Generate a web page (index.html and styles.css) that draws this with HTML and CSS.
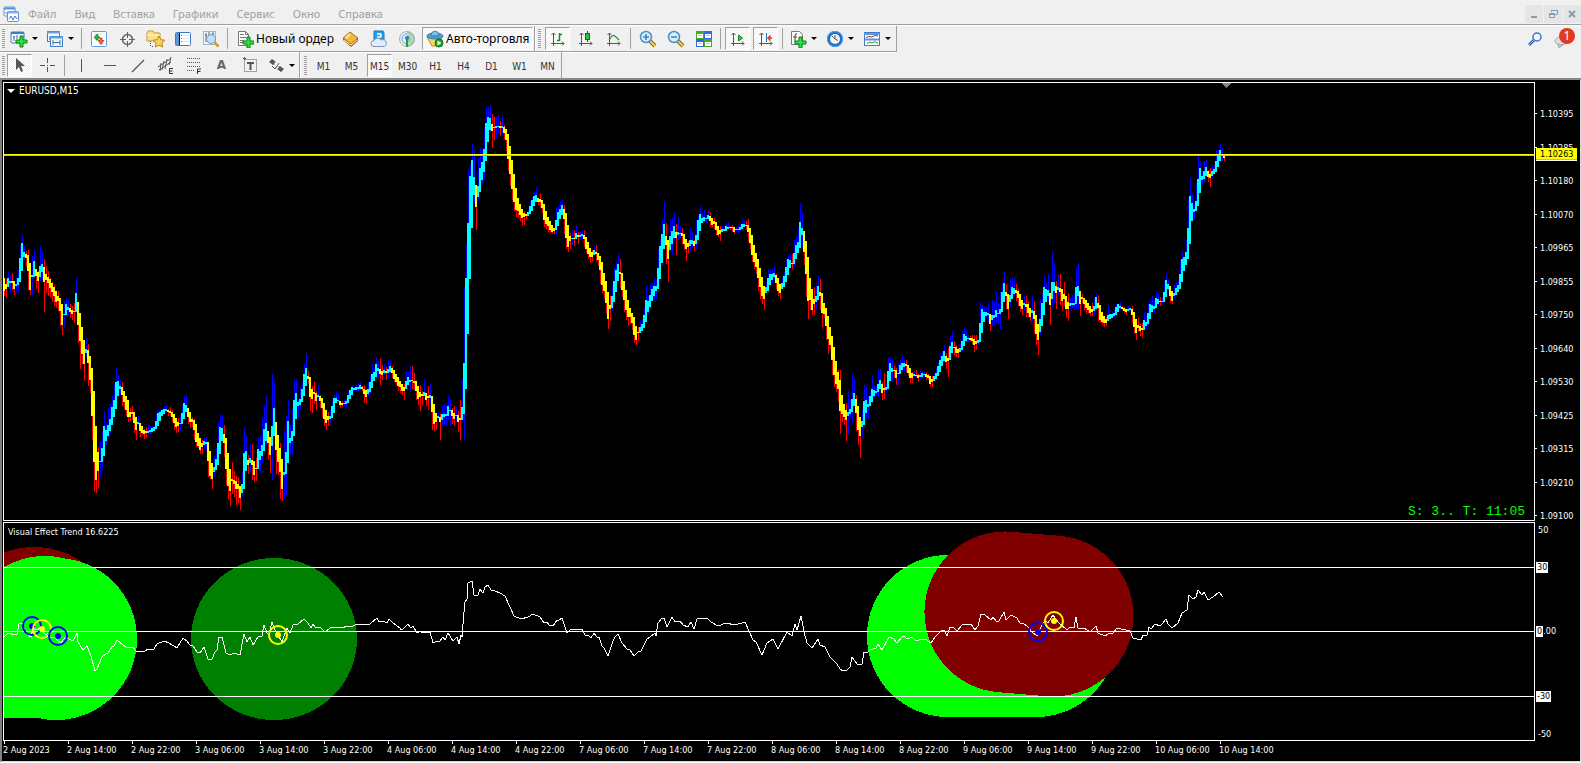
FILE: index.html
```html
<!DOCTYPE html>
<html lang="ru">
<head>
<meta charset="utf-8">
<title>EURUSD,M15</title>
<link rel="stylesheet" href="styles.css">
</head>
<body>
<header class="menubar">
  <svg class="app-icon" width="16" height="16" viewBox="0 0 16 16"><rect x="1" y="1" width="11" height="9" rx="1" fill="#fff" stroke="#5b8fdc"/><path d="M1 2.500h11" stroke="#5b8fdc" stroke-width="2"/><path d="M3 8V6M5 8V5" stroke="#5b8fdc"/><rect x="4.500" y="5.500" width="11" height="10" rx="1" fill="#fff" stroke="#5b8fdc"/><path d="M5 6.500h10" stroke="#8ab2ec" stroke-width="2"/><path d="M6 13l2-3 2 4 2-4 2 3" fill="none" stroke="#3d77cf"/></svg>
  <nav class="menu">
    <button>Файл</button><button>Вид</button><button>Вставка</button><button>Графики</button><button>Сервис</button><button>Окно</button><button>Справка</button>
  </nav>
  <div class="window-controls">
    <button aria-label="Свернуть"><svg width="10" height="10" viewBox="0 0 10 10"><path d="M2 8h6" stroke="#8a9db0" stroke-width="2"/></svg></button>
    <button aria-label="Восстановить"><svg width="10" height="10" viewBox="0 0 10 10" fill="none" stroke="#8a9db0"><path d="M3.500 3V1.500h6v4H7M3 1.500h7M1.500 4.500h5v4h-5zM1 5.500h6"/></svg></button>
    <button aria-label="Закрыть"><svg width="10" height="10" viewBox="0 0 10 10"><path d="M2 2l6 6M8 2L2 8" stroke="#8a9db0" stroke-width="2"/></svg></button>
  </div>
</header>

<div class="toolbars">
 <div class="tool-rows">
  <div class="row row-main">
    <div class="bar">
      <span class="grip"></span>
      <button class="drop" aria-label="Новый график"><svg width="18" height="18" viewBox="0 0 18 18"><rect x="1" y="2" width="13" height="11" rx="1" fill="#f4faff" stroke="#3a7fc2"/><path d="M1 3h13" stroke="#3a7fc2" stroke-width="2"/><path d="M4 6v5M3 7h2M7 5v4" stroke="#57718c"/><path d="M10 6h3v4h4v3h-4v4h-3v-4H6v-3h4z" fill="#2fe040" stroke="#078014"/></svg></button>
      <button class="drop" aria-label="Профили"><svg width="18" height="18" viewBox="0 0 18 18"><rect x="1.500" y="1.500" width="12" height="10" fill="#f4faff" stroke="#3a7fc2"/><path d="M1 2.500h13" stroke="#6da3d8" stroke-width="2"/><path d="M3 8h6M4 6v4" stroke="#57718c"/><rect x="4.500" y="6.500" width="12" height="10" fill="#e8f2fb" stroke="#3a7fc2"/><path d="M4 7.500h13" stroke="#6da3d8" stroke-width="2"/><path d="M7 10v5M14 10v5M7 12.500h7" stroke="#57718c" fill="none"/></svg></button>
      <span class="sep"></span>
      <button class="tool" aria-label="Обзор рынка"><svg width="18" height="18" viewBox="0 0 18 18"><rect x="1.500" y="1.500" width="15" height="15" rx="1" fill="#fbfdff" stroke="#5a9fdc"/><path d="M4 4h8M4 6h4M9 14h5" stroke="#cdd9e4"/><path d="M7 4l3 4H8v2H6V8H4z" fill="#2bb534" stroke="#15801c" stroke-width=".7"/><path d="M11 14.500l3-4h-2V8h-2v2.500H8z" fill="#ef6a3a" stroke="#b93410" stroke-width=".7"/></svg></button>
      <button class="tool" aria-label="Окно данных"><svg width="18" height="18" viewBox="0 0 18 18" fill="none" stroke="#606468"><circle cx="9.500" cy="9.500" r="5" stroke-width="1.500"/><path d="M9.500 2v6M9.500 11v6M2 9.500h6M11 9.500h6"/></svg></button>
      <button class="tool" aria-label="Навигатор"><svg width="20" height="18" viewBox="0 0 20 18"><path d="M2 3l1-2h5l1 2h6v8H2z" fill="#fbe38a" stroke="#c9992b"/><path d="M2 5h13" stroke="#fff4c4"/><path d="M5.500 11v6M8 16.500H6" stroke="#555" stroke-dasharray="1 1"/><path d="M14 6l1.900 3.700 4 .5-3 2.800.8 4L14 15.200 10.300 17l.8-4-3-2.800 4-.5z" fill="#fbd35a" stroke="#b98518"/></svg></button>
      <button class="tool" aria-label="Терминал"><svg width="18" height="18" viewBox="0 0 18 18"><rect x="1.500" y="2.500" width="15" height="13" rx="1" fill="#fff" stroke="#3a7cc4"/><rect x="2" y="3" width="3" height="12" fill="#5d95d4"/><path d="M5.500 3v12" stroke="#111"/><path d="M7 5.500h1M7 8.500h1M7 11.500h1" stroke="#e33"/><path d="M9 5.500h6M9 8.500h6M9 11.500h6" stroke="#dbe6f1"/></svg></button>
      <button class="tool" aria-label="Тестер стратегий"><svg width="18" height="18" viewBox="0 0 18 18"><rect x="1.500" y="1.500" width="12" height="13" fill="#f6f6f6" stroke="#a9b3bc"/><path d="M4 3v9M7 2v5M11 2v4M3 5h2M10 4h2" stroke="#5a6a78"/><circle cx="9" cy="9" r="4.500" fill="#b7dbf5" fill-opacity=".85" stroke="#6e9cc4"/><path d="M12.500 12.500l4 4" stroke="#d49a22" stroke-width="2.500"/></svg></button>
      <span class="sep"></span>
      <button class="labelled order"><svg width="18" height="18" viewBox="0 0 18 18"><path d="M2.500 1.500h7l3 3v11h-10z" fill="#fff" stroke="#777"/><path d="M9.500 1.500v3h3M4 4.500h4M4 7.500h6M4 10.500h4M4 12.500h3" stroke="#777" fill="none"/><path d="M11 7h3v4h4v3h-4v4h-3v-4H7v-3h4z" fill="#2fe040" stroke="#078014"/></svg><span>Новый ордер</span></button>
      <button class="tool" aria-label="MetaEditor"><svg width="18" height="18" viewBox="0 0 18 18"><path d="M1 8l7-6 8 6v3l-7 6-8-7z" fill="#a8690e"/><path d="M1 8l7-6 8 6-7 6z" fill="#f0b93a" stroke="#a8690e" stroke-width=".8"/><path d="M4 8l4-4" stroke="#fde9a8" stroke-width="2"/><path d="M2 10l7 5 6-5" fill="none" stroke="#fff2d0"/></svg></button>
      <button class="tool" aria-label="MQL5"><svg width="18" height="18" viewBox="0 0 18 18"><path d="M4 1h9l1 2v8H4z" fill="#27a0ea" stroke="#0e77bf"/><path d="M7 4h4M7 7h4M11 4v3" stroke="#fff" stroke-width="1.500"/><path d="M4 16.500a3 3 0 010-6 4 4 0 017-.5 3 3 0 013.500 6.500z" fill="#e5ecf5" stroke="#7d95b2"/></svg></button>
      <button class="tool" aria-label="Сигналы"><svg width="18" height="18" viewBox="0 0 18 18" fill="none"><circle cx="9" cy="9" r="7.500" stroke="#9db2c4" fill="#e8eff4"/><circle cx="9" cy="9" r="5" stroke="#62a8d6"/><path d="M9 1.500a7.500 7.500 0 010 15z" fill="#7dbf83" opacity=".7"/><path d="M9 4a5 5 0 010 10" stroke="#dff3df"/><circle cx="9" cy="8" r="2" fill="#2f75c2"/><path d="M9 9v8" stroke="#2c9a3a" stroke-width="2"/></svg></button>
      <button class="labelled auto pressed"><svg width="18" height="18" viewBox="0 0 18 18"><path d="M1 7h15l-3 9H6z" fill="#fbd65a" stroke="#c08d1d"/><ellipse cx="9" cy="6" rx="8" ry="3" fill="#4f9fd0" stroke="#2c7baf"/><path d="M5 5c0-5 8-5 8 0-2 1.500-6 1.500-8 0z" fill="#7ec1e6" stroke="#2c7baf"/><circle cx="13" cy="13" r="4" fill="#16a528" stroke="#0b7a18"/><path d="M11.500 10.500l4 2.500-4 2.500z" fill="#fff"/></svg><span>Авто-торговля</span></button>
    </div>
    <div class="bar">
      <span class="grip"></span>
      <button class="tool pressed" aria-label="Бары"><svg width="18" height="18" viewBox="0 0 18 18" fill="none"><path d="M4.500 3v13M2 13.500h13M2.500 5l2-2 2 2M13 11.500l2 2-2 2" stroke="#555"/><path d="M10.500 3v8M8 10.500h2M11 4.500h2" stroke="#1a8a1a" stroke-width="1.500"/></svg></button>
      <button class="tool" aria-label="Свечи"><svg width="18" height="18" viewBox="0 0 18 18" fill="none"><path d="M4.500 3v13M2 13.500h13M2.500 5l2-2 2 2M13 11.500l2 2-2 2" stroke="#555"/><path d="M10.500 1v11" stroke="#0c6e16"/><rect x="8.500" y="3.500" width="4" height="6" fill="#27c93c" stroke="#0c6e16"/></svg></button>
      <button class="tool" aria-label="Линия"><svg width="18" height="18" viewBox="0 0 18 18" fill="none"><path d="M4.500 3v13M2 13.500h13M2.500 5l2-2 2 2M13 11.500l2 2-2 2" stroke="#555"/><path d="M4 10l3-4 2-.5L11 7l3 3" stroke="#2a9a32" stroke-width="1.200"/></svg></button>
      <span class="sep"></span>
      <button class="tool" aria-label="Увеличить"><svg width="18" height="18" viewBox="0 0 18 18"><path d="M11 11l5 5" stroke="#94691a" stroke-width="4"/><path d="M11 11l5 5" stroke="#f1cb4e" stroke-width="2"/><circle cx="7" cy="7" r="5.500" fill="#d8eefb" stroke="#4a8fcc" stroke-width="1.500"/><path d="M4 7h6M7 4v6" stroke="#3b7fb8" stroke-width="1.500"/></svg></button>
      <button class="tool" aria-label="Уменьшить"><svg width="18" height="18" viewBox="0 0 18 18"><path d="M11 11l5 5" stroke="#94691a" stroke-width="4"/><path d="M11 11l5 5" stroke="#f1cb4e" stroke-width="2"/><circle cx="7" cy="7" r="5.500" fill="#d8eefb" stroke="#4a8fcc" stroke-width="1.500"/><path d="M4 7h6" stroke="#3b7fb8" stroke-width="1.500"/></svg></button>
      <button class="tool" aria-label="Плитка"><svg width="18" height="18" viewBox="0 0 18 18"><path d="M1 1h8v8H1zM9 9h8v8H9z" fill="#4aa52a"/><path d="M9 1h8v8H9zM1 9h8v8H1z" fill="#2f6bdc"/><path d="M2 4h6v4H2zM10 4h6v4h-6zM2 12h6v4H2zM10 12h6v4h-6z" fill="#fff"/><path d="M3 5.500h4M11 5.500h4M3 13.500h4M11 13.500h4" stroke="#b8c6d8"/></svg></button>
      <span class="sep"></span>
      <button class="tool pressed" aria-label="Автопрокрутка"><svg width="18" height="18" viewBox="0 0 18 18" fill="none"><path d="M4.500 3v13M2 13.500h13M2.500 5l2-2 2 2M13 11.500l2 2-2 2" stroke="#555"/><path d="M9.500 5l4 3-4 3z" fill="#39c54a" stroke="#128a20"/></svg></button>
      <button class="tool pressed" aria-label="Сдвиг графика"><svg width="18" height="18" viewBox="0 0 18 18" fill="none"><path d="M4.500 3v13M2 13.500h13M2.500 5l2-2 2 2M13 11.500l2 2-2 2" stroke="#555"/><path d="M9.500 3v9" stroke="#2a6fb5"/><path d="M15 8h-3M13.500 5.500L11 8l2.500 2.500" stroke="#d2411a" stroke-width="1.500"/></svg></button>
      <span class="sep"></span>
      <button class="drop" aria-label="Индикаторы"><svg width="18" height="18" viewBox="0 0 18 18"><path d="M2.500 1.500h8l3 3v10h-11z" fill="#fff" stroke="#777"/><path d="M8 4q-2-1-2 2v6M4 7h4" fill="none" stroke="#444"/><path d="M10 7h3v4h4v3h-4v4h-3v-4H6v-3h4z" fill="#2fe040" stroke="#078014"/></svg></button>
      <button class="drop" aria-label="Периоды"><svg width="18" height="18" viewBox="0 0 18 18"><circle cx="9" cy="9" r="6.500" fill="#f3f6f9" stroke="#1f6fc4" stroke-width="3"/><circle cx="9" cy="9" r="7.500" fill="none" stroke="#4fa0ea"/><path d="M9 5v4l3 1.500M6 6l3 3" fill="none" stroke="#555"/></svg></button>
      <button class="drop" aria-label="Шаблоны"><svg width="18" height="18" viewBox="0 0 18 18"><rect x="1.500" y="2.500" width="15" height="13" fill="#fff" stroke="#3f7fc6"/><path d="M1 4h16M2 9.500h14" stroke="#5c98da" stroke-width="2"/><path d="M3 7.500l3-1 3 .5 3-1.500 3 .5" fill="none" stroke="#a33"/><path d="M4 13.500l3-1.500 2 1 3-1.500 3 2" fill="none" stroke="#2a8f36"/></svg></button>
    </div>
  </div>
  <div class="row">
    <div class="bar">
      <span class="grip"></span>
      <button class="tool pressed" aria-label="Курсор"><svg width="18" height="18" viewBox="0 0 18 18"><path d="M5 2v12l3-3 2 5 2-1-2-5h4z" fill="#555"/></svg></button>
      <button class="tool" aria-label="Перекрестие"><svg width="18" height="18" viewBox="0 0 18 18"><path d="M8.500 2v5M8.500 11v5M1 9.500h5M11 9.500h5M8 9.500h1" stroke="#555"/></svg></button>
      <span class="sep"></span>
      <button class="tool" aria-label="Вертикальная линия"><svg width="18" height="18" viewBox="0 0 18 18"><path d="M8.500 3v13" stroke="#555"/></svg></button>
      <button class="tool" aria-label="Горизонтальная линия"><svg width="18" height="18" viewBox="0 0 18 18"><path d="M3 9.500h12" stroke="#555"/></svg></button>
      <button class="tool" aria-label="Трендовая линия"><svg width="18" height="18" viewBox="0 0 18 18"><path d="M3 16L15 4" stroke="#555" stroke-width="1.200"/></svg></button>
      <button class="tool" aria-label="Канал"><svg width="18" height="18" viewBox="0 0 18 18"><path d="M1 11L13 3M2 14L14 6M4 7l-1 8M7 5l-2 9M10 3l-2 10M14 1l-2 8" stroke="#555" fill="none"/><path d="M16 12.500h-3.500v5H16M12.500 15h3" stroke="#333" fill="none"/></svg></button>
      <button class="tool" aria-label="Фибоначчи"><svg width="18" height="18" viewBox="0 0 18 18"><path d="M2 2.500h14M2 6.500h14M2 10.500h14M2 14.500h8" stroke="#555" stroke-dasharray="1 1"/><path d="M12.500 18v-5H16M12.500 15.500h3" stroke="#333" fill="none"/></svg></button>
      <button class="tool glyph">A</button>
      <button class="tool" aria-label="Метка"><svg width="18" height="18" viewBox="0 0 18 18" fill="none"><rect x="3.500" y="3.500" width="12" height="12" stroke="#555" stroke-dasharray="1 1"/><path d="M2 2.500h3M3.500 1v3" stroke="#555"/><path d="M6 7h7M9.500 7v7" stroke="#555" stroke-width="2"/></svg></button>
      <button class="drop" aria-label="Стрелки"><svg width="18" height="18" viewBox="0 0 18 18"><path d="M5 3l4 3-2 1 1 1-2 1-4-3zM14 16l-4-3 2-1-1-1 2-1 4 3z" fill="#555"/><path d="M5 10l3 3 4-6" fill="none" stroke="#555"/></svg></button>
    </div>
    <div class="bar periods">
      <span class="grip"></span>
      <button class="tool">M1</button><button class="tool">M5</button><button class="tool pressed">M15</button><button class="tool">M30</button><button class="tool">H1</button><button class="tool">H4</button><button class="tool">D1</button><button class="tool">W1</button><button class="tool">MN</button>
    </div>
  </div>
 </div>
 <div class="status">
  <button aria-label="Поиск"><svg width="16" height="16" viewBox="0 0 16 16"><path d="M1 14l5-5" stroke="#2a62c8" stroke-width="3"/><path d="M1 14l5-5" stroke="#8db4f0"/><circle cx="9" cy="6" r="4" fill="#f4f8ff" stroke="#3d73d0" stroke-width="1.500"/></svg></button>
  <button class="messages" aria-label="Сообщения"><svg width="18" height="18" viewBox="0 0 18 18"><ellipse cx="7" cy="10" rx="6" ry="4" fill="#dfdfe3" stroke="#a2a2a8"/><path d="M4 13l1 4 4-3z" fill="#c9c9cd" stroke="#9a9aa0" stroke-width=".7"/></svg><span class="badge">1</span></button>
 </div>
</div>

<main class="chart">
  <section class="panel price-panel">
    <svg id="price" class="plot"></svg>
    <h1 class="caption symbol">EURUSD,M15</h1>
    <p class="timer">S: 3.. T: 11:05</p>
  </section>
  <div class="axis price-axis">
    <span>1.10395</span><span>1.10285</span><span>1.10180</span><span>1.10070</span><span>1.09965</span><span>1.09855</span><span>1.09750</span><span>1.09640</span><span>1.09530</span><span>1.09425</span><span>1.09315</span><span>1.09210</span><span>1.09100</span>
    <b class="bid">1.10263</b>
  </div>
  <section class="panel trend-panel">
    <svg id="trend" class="plot"></svg>
    <h2 class="caption">Visual Effect Trend 16.6225</h2>
  </section>
  <div class="axis trend-axis">
    <span>50</span><span><mark>30</mark></span><span><mark>0</mark>.00</span><span><mark>-30</mark></span><span>-50</span>
  </div>
  <div class="dates">
    <time>2 Aug 2023</time><time>2 Aug 14:00</time><time>2 Aug 22:00</time><time>3 Aug 06:00</time><time>3 Aug 14:00</time><time>3 Aug 22:00</time><time>4 Aug 06:00</time><time>4 Aug 14:00</time><time>4 Aug 22:00</time><time>7 Aug 06:00</time><time>7 Aug 14:00</time><time>7 Aug 22:00</time><time>8 Aug 06:00</time><time>8 Aug 14:00</time><time>8 Aug 22:00</time><time>9 Aug 06:00</time><time>9 Aug 14:00</time><time>9 Aug 22:00</time><time>10 Aug 06:00</time><time>10 Aug 14:00</time>
  </div>
</main>
<script src="chart.js"></script>
</body>
</html>
```

FILE: styles.css
```css
* { box-sizing: border-box; }
body { margin: 0; background: #fff; font-family: "Noto Sans", "Open Sans", sans-serif; font-size: 12px; color: #000; }
button { margin: 0; padding: 0; border: 0; background: none; font: inherit; color: inherit; }
svg { display: block; flex: none; }

.menubar { display: flex; align-items: center; height: 25px; padding: 4px 0 0 3px; background: #f0f0f0; border-bottom: 1px solid #a0a0a0; }
.menu { display: flex; flex: 1; }
.menu button { padding: 0 9px; font-size: 11px; line-height: 18px; color: #a0a0a0; }
.window-controls { display: flex; gap: 1px; }
.window-controls button { display: grid; place-items: center; width: 18px; height: 18px; background: #e5e5e5; }

.toolbars { display: flex; justify-content: space-between; height: 55px; background: #f0f0f0; border-top: 1px solid #fff; border-bottom: 2px solid #8a8a8a; }
.tool-rows { display: flex; flex-direction: column; }
.row { display: flex; height: 26px; width: max-content; }
.row-main { border-bottom: 1px solid #a0a0a0; box-shadow: 0 1px 0 #fff; }
.bar { display: flex; align-items: center; height: 100%; border-right: 1px solid #a0a0a0; }
.row-main .bar:first-child { padding-right: 1px; }
.bar + .bar { box-shadow: inset 1px 0 0 #fff; }
.grip { width: 3px; height: 19px; margin: 0 2px 0 3px; background: repeating-linear-gradient(#a0a0a0 0 1px, #f0f0f0 1px 2px); }
.row-main .bar:first-child .grip { margin: 0 1px 0 2px; }
.row:last-child .bar:first-child .grip { margin: 0 0 0 2px; }
.row:last-child .periods .grip { margin: 0 2px 0 4px; }
.sep { width: 1px; height: 21px; margin: 0 2px 0 3px; background: #a0a0a0; }
.tool { display: grid; place-items: center; width: 25px; height: 23px; margin: 0 1px 0 2px; }
.drop { display: flex; align-items: center; gap: 4px; width: 36px; height: 23px; padding-left: 4px; }
.bar + .bar .drop { width: 37px; }
.drop::after { content: ""; border: 3px solid transparent; border-top-color: #000; border-bottom: 0; }
.labelled { display: flex; align-items: center; gap: 2px; height: 23px; white-space: nowrap; line-height: 16px; }
.order { width: 106px; padding-left: 6px; }
.auto { width: 111px; margin-left: 2px; padding-left: 3px; }
.pressed { background: repeating-conic-gradient(#fff 0 25%, #f0f0f0 0 50%) 0 0 / 2px 2px; border: 1px solid; border-color: #a0a0a0 #fff #fff #a0a0a0; }
.glyph { font-family: "DejaVu Sans", sans-serif; font-size: 12px; font-weight: bold; color: #666; }
.periods .tool { padding-top: 2px; font-family: "DejaVu Sans Condensed", "DejaVu Sans", sans-serif; font-size: 10px; color: #333; }
.status { display: flex; gap: 10px; padding: 5px 6px 0 0; align-items: flex-start; }
.messages { position: relative; padding-right: 3px; }
.badge { position: absolute; top: -3px; right: 0; width: 16px; height: 16px; border-radius: 50%; background: #e03a22; color: #fff; font-size: 12px; line-height: 16px; text-align: center; }

.chart { display: grid; grid-template-columns: 1fr 45px; row-gap: 1px; padding: 2px 0 0 1px; background: #000; border-left: 2px solid #808080; border-right: 1px solid #d8d8d8; border-bottom: 1px solid #d8d8d8; color: #fff; font-family: "DejaVu Sans Condensed", "DejaVu Sans", sans-serif; font-size: 9px; }
.panel { position: relative; border: 1px solid #fff; overflow: hidden; }
.plot { width: 100%; shape-rendering: crispEdges; }
.price-panel .plot { height: 437px; }
.trend-panel .plot { height: 217px; }
.caption { position: absolute; top: 3px; left: 4px; margin: 0; font-size: 9px; font-weight: normal; line-height: 12px; }
.symbol { display: flex; align-items: center; gap: 4px; top: 2px; left: 3px; font-size: 10px; }
.symbol::before { content: ""; border: 4px solid transparent; border-top-color: #fff; border-bottom: 0; }
.timer { position: absolute; right: 9px; bottom: 0; margin: 0; color: #0f0; font: 13px/16px "Liberation Mono", monospace; }
.axis span { position: relative; line-height: 10px; }
.price-axis { position: relative; display: flex; flex-direction: column; justify-content: space-between; padding: 27px 0 0 5px; }
.price-axis span::before { content: ""; position: absolute; left: -5px; top: 4px; width: 2px; height: 1px; background: #fff; }
.bid { position: absolute; left: 1px; top: 66px; width: 41px; padding-left: 4px; background: #ff0; color: #000; font-weight: normal; line-height: 12px; border-bottom: 1px solid #fff; box-shadow: inset 0 -1px 0 #0ff; }
.trend-axis { display: grid; grid-template-rows: 16px 58px 70px 60px 15px; align-items: center; padding-left: 3px; }
.trend-axis mark { display: inline-block; margin-left: -2px; padding: 0 1px; background: #fff; color: #000; line-height: 11px; }
.dates { grid-column: 1 / -1; display: flex; height: 20px; margin-top: -1px; overflow: hidden; }
.dates time { flex: none; width: 64px; line-height: 13px; white-space: nowrap; }
.dates time::before { content: ""; display: block; width: 1px; height: 3px; margin-left: 1px; background: #fff; }
```

FILE: chart.js
```js
// Candle runs: origin, then runs of "u" (rising) or "d" (falling) candles.
// Each candle is x, high, body top, body bottom, low in thirds of a pixel.
const CANDLES = [
[0, 220, `d 9 174 174 213 228;15 178 192 207 234
u 21 153 174 201 201;27 165 183 189 219
d 33 159 183 190 210;39 183 183 207 225
u 45 174 192 197 216;51 150 174 195 219;57 75 114 186 186;63 45 69 153 153;69 75 96 111 120
d 75 93 102 114 141;81 90 105 153 210;87 129 129 210 225
u 93 108 165 170 225;99 90 123 171 171
d 105 147 147 168 207;111 153 156 183 219
u 117 75 138 171 183;123 93 132 156 180
d 129 117 141 186 276;135 138 162 180 219;141 153 171 189 228;147 174 177 204 231;159 195 201 228 258;165 213 213 246 264;171 213 228 243 273;177 233 234 273 318;183 252 252 315 345
u 189 243 282 285 324;195 234 252 285 285;201 237 261 270 285
d 207 252 264 276 294;213 258 270 282 300;219 249 273 276 309
u 225 171 219 276 276
d 231 246 246 315 369;237 279 279 363 447;243 321 321 402 432;249 360 360 432 483
u 255 351 387 399 411
d 261 372 390 429 498;267 408 408 480 519;273 444 444 588 660;279 513 513 726 816;285 618 618 780 819;291 681 696 753 804
u 297 663 723 726 771;303 636 684 726 750;309 573 618 708 708;315 612 630 663 675;321 564 615 648 650;327 552 597 633 640;333 528 561 615 615;339 492 540 591 591;345 444 486 567 567;351 468 483 528 528;357 480 498 507 525
d 363 486 500 525 558;369 513 513 546 567;381 540 540 591 606;387 564 576 591 603;393 558 576 582 600;399 576 576 609 639;405 591 591 630 660
u 411 585 606 612 615
d 417 609 609 633 651;423 618 618 640 646;429 627 630 642 657;435 621 633 639 651
u 441 618 633 639 645;459 618 621 633 633;465 582 603 627 627;471 570 579 618 618;483 567 570 588 588;489 558 567 582 582;495 558 567 573 573
d 501 566 570 575 588;507 561 573 579 588;513 570 576 591 606;519 582 582 609 630;525 594 594 621 639;531 594 606 618 636
u 537 585 609 613 633;543 555 579 612 612;549 528 549 597 597;555 525 555 576 579
d 561 564 564 591 612;567 576 576 606 624;573 590 597 606 621;579 597 600 630 660;585 612 612 666 680;591 639 639 678 684;597 654 654 690 702;603 660 669 681 702
u 609 651 663 675 687;615 651 666 671 687
d 621 666 666 723 771;627 693 693 768 777;633 729 729 777 807
u 639 708 741 756 771;645 684 717 750 750;651 603 669 735 735;657 582 621 702 702;663 585 624 663 663
d 669 615 642 669 711;675 654 654 747 795;681 699 699 798 840;687 747 747 813 858;693 726 777 783 822;699 753 780 792 831;705 768 783 807 855;711 771 792 807 849;717 798 798 834 870
u 723 756 792 819 831;729 624 699 807 807;735 648 693 753 753
d 741 705 720 735 762
u 747 669 714 729 756
d 753 672 720 735 780;759 723 723 765 786;765 714 744 748 783
u 771 651 687 747 747;777 648 693 720 759;783 594 675 708 729;789 555 627 693 693;795 528 609 663 675
d 801 633 633 669 720;807 651 651 705 759
u 813 462 618 678 780;819 486 564 648 648
d 825 606 606 690 762;831 645 645 726 765;837 670 684 756 837;843 717 717 807 843
u 849 636 756 765 837;855 585 696 762 825;861 540 603 729 729;867 615 654 669 702;873 567 633 663 705;879 477 540 648 648;885 477 519 597 597;891 540 546 558 591;897 501 537 555 570;903 486 507 546 546;909 432 462 528 528;915 399 444 498 498
d 921 453 468 477 492;927 471 471 531 573;933 498 507 537 579;939 486 516 522 552;945 513 519 543 570
u 951 495 525 531 546
d 957 525 528 543 564;963 534 534 564 591;969 549 549 597 618;975 570 570 609 630;981 576 588 600 618
u 987 570 588 597 612;993 543 558 594 594;999 525 534 579 579;1005 516 534 549 549;1011 519 540 543 546
d 1017 543 543 555 564;1023 543 549 555 561
u 1029 540 548 552 561;1035 537 543 551 564;1041 513 525 549 549;1047 507 510 537 537;1053 496 501 525 525;1059 501 503 510 513;1071 489 501 507 513;1077 486 495 507 507
d 1083 498 501 507 513;1089 495 507 522 549;1095 507 510 531 552
u 1101 486 507 522 531;1107 465 486 516 519;1113 432 462 504 504;1119 441 456 483 483;1125 411 432 471 471;1131 423 444 453 474
d 1137 414 447 462 495;1143 435 453 465 480
u 1149 432 450 459 465
d 1155 441 454 459 480
u 1161 420 447 459 477;1167 426 438 456 459
d 1173 438 444 459 474;1179 450 450 477 486;1185 462 462 486 495;1191 471 471 497 513;1197 483 483 500 520`],
[400, 80, `d 3 912 912 933 945;9 912 921 933 960
u 15 876 903 927 927;21 876 891 915 915;27 857 900 906 936
d 33 858 900 903 927;39 879 902 909 930;45 903 903 933 960;51 918 918 957 975;57 915 936 951 993;63 933 941 948 975
u 69 897 936 948 948
d 75 939 939 960 978;81 918 948 953 990
u 87 912 945 954 970
d 93 948 948 996 1050;99 972 972 1032 1053;105 999 999 1026 1050
u 111 996 1008 1014 1020
d 117 1002 1011 1026 1080
u 123 975 1002 1020 1035;129 972 1002 1011 1035;135 975 1003 1008 1038;141 948 978 1008 1020;147 957 990 993 1038
d 153 984 990 1008 1032;159 978 999 1017 1038
u 165 981 1005 1008 1023
d 171 993 1005 1026 1056;177 960 1014 1020 1080
u 183 900 981 1020 1023;189 621 849 1002 1080;195 492 594 927 927;201 267 429 762 762;207 252 288 597 597;213 192 240 444 444;219 207 291 345 369
d 225 315 315 381 450
u 231 234 318 351 363;237 204 264 336 336;243 210 246 300 309;249 141 207 276 300;255 84 129 243 243;261 81 111 186 186;267 78 114 150 156
d 273 102 132 153 204;279 111 141 145 180
u 285 114 138 144 177;291 105 138 142 159
d 297 123 138 144 168
u 303 105 138 144 165
d 309 135 141 159 177;315 147 147 180 213;321 162 162 237 273;327 198 198 282 318;333 240 240 327 360;339 282 282 366 393;345 324 324 390 411;351 354 354 393 411;357 372 372 405 423;363 387 387 414 438;369 393 400 411 435;375 399 403 408 417
u 381 390 396 408 408;387 366 378 402 402;393 351 360 393 393;399 336 348 378 378;405 321 345 366 366
d 411 353 354 366 375;417 339 357 366 384;423 360 360 384 399;429 372 372 420 441;435 393 393 432 447;441 411 411 438 456;447 423 423 450 459;453 435 435 456 462;459 444 444 453 462
u 465 381 420 450 465;471 378 396 438 438;477 366 387 417 417;483 360 375 405 405
d 489 375 387 417 462;495 399 399 474 507;501 435 435 501 516;507 459 468 483 507
u 513 447 474 477 495
d 519 450 474 477 498
u 525 435 459 477 477
d 531 456 465 471 492
u 537 456 465 471 480;543 450 463 468 477
d 549 450 465 477 501;555 471 471 507 519;561 486 486 522 537;567 504 504 531 549;573 510 516 531 543
u 579 498 510 525 525
d 585 495 516 522 546;591 519 519 540 558;597 528 528 570 612;603 546 546 615 639;609 579 579 633 657;615 603 603 669 702;621 636 636 717 747;627 648 675 687 723
u 633 615 648 684 693;639 564 603 666 666;645 546 570 636 636;651 519 552 603 603
d 657 537 576 582 624;663 579 579 630 651;669 603 603 660 696;675 630 630 690 720;681 660 660 711 738;687 684 684 711 731;693 699 699 729 750;699 711 711 765 789;705 738 738 780 795;711 741 756 759 783
u 717 723 741 759 759;723 717 732 753 753;729 681 705 744 744;735 615 660 726 726;741 648 663 696 699;747 612 645 681 684;753 609 627 663 663;759 591 618 648 657;765 600 618 633 657;771 507 564 627 627;777 477 498 597 597;783 420 462 549 549;789 363 432 507 507
d 795 429 468 495 552;801 480 480 537 606
u 807 420 468 510 510;813 414 453 492 525;819 396 438 474 483
d 825 432 456 474 525
u 831 411 456 465 480;837 438 459 462 474
d 843 444 459 468 492;849 462 462 492 510;855 477 477 507 543;861 483 489 501 519
u 867 441 480 498 513;873 456 480 492 504
d 879 480 483 498 513
u 885 420 465 492 510;891 408 420 480 480;897 375 402 453 453;903 399 414 429 429;909 390 411 423 426;915 408 414 417 429;921 393 405 417 417
d 927 396 408 423 441;933 414 414 435 441;939 414 423 432 447;945 426 426 450 465;951 438 438 465 471;957 438 450 462 483
u 963 438 447 456 456;969 441 448 453 453;975 432 438 453 453;981 426 440 446 448
d 987 438 441 444 450;993 435 441 445 456;999 441 441 456 462
u 1005 441 447 450 456;1011 438 447 450 459;1017 429 441 450 453;1023 420 432 447 447;1029 423 433 441 441
d 1035 423 435 438 450;1041 417 435 456 483;1047 444 444 489 507;1053 465 465 525 546;1059 495 495 546 567;1065 519 519 561 582;1071 537 537 594 633;1077 564 564 621 657;1083 591 591 648 672;1089 618 618 657 690
u 1095 606 621 639 639;1101 567 594 633 633;1107 570 582 615 615;1113 567 582 600 612;1119 558 579 591 597
d 1125 582 585 609 627;1131 594 594 633 648;1137 612 612 639 657
u 1143 594 609 627 627;1149 576 588 621 621;1155 537 561 606 606;1161 525 537 585 585;1167 519 540 564 564
d 1173 521 549 552 567
u 1179 480 519 552 561;1185 465 495 537 537;1191 444 486 519 519;1197 369 426 504 504;1203 393 444 465 504
d 1209 453 453 516 555;1215 483 483 582 651;1221 531 531 663 717;1227 594 594 660 690;1233 627 627 690 705;1239 621 657 672 705
u 1245 618 648 666 690;1251 588 618 660 660
d 1257 597 636 648 690;1263 639 639 699 741;1269 669 669 702 714;1275 684 684 738 780;1281 708 708 777 822;1287 741 741 795 807;1293 768 768 840 885;1299 801 801 885 921;1305 843 843 912 936;1311 870 876 927 966`],
[780, 180, `d 177 570 600 693 762;183 645 645 702 726;189 672 672 711 735;195 669 690 720 783
u 201 633 696 708 762;207 657 687 702 714;213 579 657 696 729;219 597 639 678 678
d 225 645 657 699 753;231 678 678 750 795;237 711 711 768 834
u 243 687 723 741 771;249 615 663 735 735;255 618 660 699 714;261 648 672 681 720;267 633 648 678 678;273 585 627 666 666;279 618 630 648 651;285 618 633 639 645;291 570 612 636 651;297 567 600 627 627
d 303 606 612 639 660;309 579 624 630 657
u 315 609 621 630 639;321 534 573 627 627;327 534 549 603 603;333 540 564 576 603
d 339 558 570 573 591;345 564 570 594 615
u 351 549 579 582 618;357 540 555 582 582;363 525 549 570 576;369 540 549 561 573
d 375 540 552 558 576;381 555 555 579 588;387 564 564 594 609;393 576 579 594 609
u 399 573 582 588 591
d 405 570 585 588 591;411 582 585 594 606
u 417 573 585 591 597;423 573 579 591 591;429 573 582 585 591
d 435 576 582 591 600;441 582 585 594 600;447 588 588 612 621;453 588 597 606 621
u 459 582 588 603 603;465 564 579 597 597;471 549 558 588 588;477 519 540 576 576;483 516 528 558 558;489 495 513 543 543
d 495 519 528 546 567;501 504 534 543 591
u 507 468 498 540 540;513 453 486 519 519
d 519 483 501 504 525;525 495 501 519 531;531 504 507 519 534
u 537 492 504 516 516;543 453 483 510 513;549 444 462 498 498;555 450 468 483 486;561 465 474 477 486
d 567 468 474 480 486;573 465 474 483 492;579 465 477 495 516;585 465 483 492 510
u 591 477 480 489 495;597 366 429 486 486;603 375 387 459 459;609 381 396 426 426;615 381 396 408 411;621 363 399 405 426
d 627 402 402 432 453
u 633 360 405 420 438;639 363 405 414 438;645 336 390 411 429;651 369 399 402 432;657 336 387 402 447;663 312 336 396 396;669 276 309 366 366
d 675 312 336 348 387;681 342 342 387 417
u 687 297 345 366 384;693 294 321 357 357;699 291 324 342 345
d 705 312 330 339 363;711 327 333 354 378;717 342 342 378 396;723 360 360 387 405
u 729 348 369 375 393
d 735 348 372 381 411;741 366 372 399 411;747 384 384 411 423
u 753 348 390 399 423
d 759 366 393 417 459;765 405 405 462 495;771 432 432 480 525
u 777 357 417 456 468;783 339 369 438 438;789 285 321 405 405;795 309 327 366 366;801 282 330 348 366
d 807 339 339 375 435
u 813 213 306 357 381;819 249 306 333 369
d 825 303 318 339 387
u 831 285 321 330 348
d 837 282 324 336 375;843 327 327 363 393;849 306 342 357 378;855 348 348 387 414;861 339 366 387 423
u 867 354 369 378 390;873 345 369 375 384;879 339 369 375 390;885 264 321 372 387;891 249 318 348 387
d 897 333 333 372 408;903 342 351 357 369;909 354 354 372 390;915 360 360 384 402;921 369 369 390 399;927 378 378 399 408;933 369 387 396 408
u 939 354 378 393 405;945 339 351 387 387
d 951 345 369 384 423;957 375 375 420 429;963 396 396 426 435;969 408 408 429 441;975 411 417 429 438
u 981 375 405 423 423;987 402 402 417 417;999 390 399 408 411;1005 372 381 405 405;1011 369 372 396 396;1017 366 378 384 387
d 1023 378 381 387 390;1029 381 384 393 399;1035 387 387 396 405
u 1041 378 387 393 396;1047 381 384 390 390
d 1053 378 387 405 429;1059 396 396 441 462;1065 417 417 459 480;1071 414 435 444 456;1077 432 438 453 468;1083 429 444 450 474
u 1089 396 420 450 450;1095 408 426 438 447;1101 369 399 432 438;1107 360 372 417 417;1113 348 375 396 396;1119 360 378 387 399;1125 336 354 384 384;1131 342 357 372 375
d 1137 351 363 366 378
u 1143 351 363 366 369;1149 303 336 366 366;1155 282 300 351 351;1161 300 312 327 330
d 1167 318 318 348 369;1173 333 333 363 372
u 1179 315 339 348 360;1185 306 324 345 345;1191 300 315 336 336`],
[1140, 78, `u 117 546 588 633 633;123 519 543 612 612;129 537 537 579 579;135 486 522 561 561;141 360 450 543 543;147 300 354 498 498;153 348 375 429 429;159 378 393 402 426;165 315 369 399 399;171 234 303 384 384;177 249 270 345 345;183 282 294 306 321;189 249 279 303 312;195 243 267 294 294
d 201 276 279 297 312;207 270 288 300 327
u 213 261 279 294 300;219 261 273 288 288;225 216 249 282 282;231 216 228 267 267;237 198 216 249 249;243 207 231 234 249
d 249 234 234 240 249`]
];

// Trend line points, same units.
const TREND = [
[0, 520, "12,352 20,343 30,338 38,344 50,343 57,312 68,310 75,335 85,345 92,352 98,325 110,330 120,325 130,335 137,346 145,338 150,352 165,355 175,362 182,370 190,360 200,350 207,358 220,362 230,338 235,365 248,390 260,378 272,408 285,452 292,448 305,410 318,402 325,400 335,380 342,378 352,360 370,375 378,382 388,384 400,382 408,392 425,392 432,395 445,388 462,388 470,372 492,364 508,370 530,384 540,370 548,355 560,362 570,375 580,378 590,395 600,398 612,382 625,418 637,416 645,395 650,390 658,350 665,350 678,398 690,406 702,398 710,402 720,405 732,343 740,365 750,352 760,374 775,350 785,348 793,315 800,340 808,345 817,305 825,330 845,365 860,325 870,340 878,315 895,312 913,298 925,308 932,325 938,312 945,320 960,320 975,336 990,325 1012,320 1025,325 1040,318 1060,318 1070,312 1110,312 1130,293 1138,306 1150,302 1160,308 1167,298 1180,310 1200,325"],
[400, 520, "0,328 10,326 23,312 32,325 40,317 50,340 60,332 70,338 90,337 98,370 110,362 120,362 128,350 135,360 145,340 160,362 170,352 176,372 182,345 187,352 192,275 194,245 200,238 205,190 216,184 223,226 233,224 240,206 248,218 255,200 264,196 272,210 285,213 300,218 315,228 330,262 342,288 362,297 385,292 400,283 420,290 432,308 440,307 446,316 460,318 470,300 478,300 486,294 500,340 512,328 545,327 555,345 565,346 573,354 583,340 590,350 597,352 605,378 613,385 625,408 640,362 645,350 655,342 665,368 680,388 690,390 703,408 715,395 722,393 740,358 750,352 765,340 768,347 775,308 785,293 793,293 800,322 816,292 825,306 840,302 850,314 865,321 872,306 883,326 892,296 905,293 925,296 932,306 955,318 978,308 1005,315 1035,307 1060,360 1068,366 1087,405 1100,370 1118,358 1135,388 1162,336 1176,348 1184,312 1190,330 1202,287 1208,318 1212,335 1220,370 1237,385 1255,356 1260,375 1275,382 1290,412 1310,432"],
[840, 520, "0,448 10,454 20,450 30,440 37,410 55,436 65,432 72,396 82,400 90,390 108,384 115,373 127,390 148,352 162,357 170,368 190,348 205,357 215,352 228,364 245,357 262,360 272,370 285,350 303,332 312,330 320,348 330,322 340,320 350,332 370,312 392,313 405,330 415,318 423,283 435,284 453,300 460,290 467,303 476,303 492,275 498,300 512,284 530,294 540,310 550,308 565,320 575,335 590,348 605,315 615,300 625,310 640,285 655,305 680,330 690,322 702,325 709,292 715,325 733,323 750,335 769,317 775,340 795,348 810,338 820,340 830,325 870,334 880,355 902,360 910,345 920,345 927,322 932,328 945,312 960,318 970,308 979,296 985,312 995,325 1015,308 1025,278 1040,270 1047,226 1060,238 1068,232 1075,210 1085,225 1092,215 1105,240 1118,230 1138,217 1150,230"]
];

const px = v => Math.round(v / 3);
const rect = (x, y, w, h) => `M${x} ${y}h${w}v${h}h${-w}z`;

function drawPrice() {
  const paths = { uw: "", dw: "", ub: "", db: "" };
  for (const [ox, oy, text] of CANDLES) {
    for (const run of text.split("\n")) {
      const dir = run[0];
      const keys = run.slice(2).split(";").map(k => k.split(" ").map(Number));
      keys.forEach((key, i) => {
        const next = keys[i + 1];
        const steps = next ? (next[0] - key[0]) / 6 : 1;
        for (let s = 0; s < steps; s++) {
          const [x, hi, top, bottom, lo] = key.map((v, n) => next ? v + (next[n] - v) * s / steps : v);
          const bx = ox + px(x);
          paths[dir + "w"] += rect(bx + 1, oy + px(hi), 1, px(lo) - px(hi));
          paths[dir + "b"] += rect(bx, oy + px(top), 2, Math.max(1, px(bottom) - px(top)));
        }
      });
    }
  }
  document.getElementById("price").innerHTML = `<g transform="translate(-4 -83)">
    <path fill="#00f" d="${paths.uw}"/><path fill="#f00" d="${paths.dw}"/>
    <path fill="#0ff" d="${paths.ub}"/><path fill="#ff0" d="${paths.db}"/>
    <path fill="#778899" d="M1221 83h10l-5 5z"/></g>
    <rect y="71" width="100%" height="1" fill="#ff0"/><rect y="72" width="100%" height="1" fill="#0ff"/>`;
}

function drawTrend() {
  const points = TREND.flatMap(([ox, oy, text]) => text.split(" ").map(p => {
    const [x, y] = p.split(",").map(Number);
    return `${ox + px(x)},${oy + px(y)}`;
  })).join(" ");
  const marker = (x, y, c) => `<circle cx="${x}" cy="${y}" r="9" fill="none" stroke="${c}" stroke-width="2"/><circle cx="${x}" cy="${y}" r="3" fill="${c}"/>`;
  const level = y => `<rect y="${y - 523}" width="100%" height="1" fill="#fff"/>`;
  document.getElementById("trend").innerHTML = `<g transform="translate(-4 -523)">
    <circle cx="34" cy="632" r="85" fill="maroon"/>
    <path d="M4 640h34v78H4z" fill="lime"/><g fill="lime"><circle cx="45" cy="637" r="81"/><circle cx="56" cy="639" r="81"/></g>
    <ellipse cx="274" cy="639" rx="83" ry="81" fill="green"/>
    <path d="M948 636h88" stroke="lime" stroke-width="162" stroke-linecap="round"/>
    <path d="M1005 612l48 4" stroke="maroon" stroke-width="161" stroke-linecap="round"/></g>
    ${level(567)}${level(631)}${level(696)}
    <g transform="translate(-4 -523)"><polyline points="${points}" fill="none" stroke="#fff"/>
    <g shape-rendering="auto">${marker(32, 626, "#00f")}${marker(42, 629, "#ff0")}${marker(58, 636, "#00f")}${marker(278, 635, "#ff0")}${marker(1038, 632, "#00f")}${marker(1054, 621, "#ff0")}</g></g>`;
}

drawPrice();
drawTrend();
```
